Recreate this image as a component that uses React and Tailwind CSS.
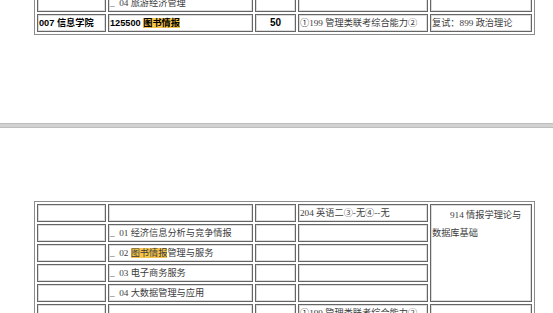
import React from "react";

const serif = "font-['Liberation_Serif','Noto_Sans_CJK_SC',serif]";
const sans = "font-['Liberation_Sans','Noto_Sans_CJK_SC',sans-serif]";

const Hl = ({ children }) => (
  <span className="bg-[#f6c54a]">{children}</span>
);

// one bordered cell of the old-style html table
const Cell = ({ w, className = "", children, ...rest }) => (
  <td
    {...rest}
    className={`${w} h-[18px] border border-[#666] shadow-[inset_0_0_0_1px_#dcdcdc] px-px align-middle leading-[16px] whitespace-nowrap overflow-hidden ${className}`}
  >
    {children}
  </td>
);

const widths = ["w-[69px]", "w-[145px]", "w-[41px]", "w-[130px]", "w-[102px]"];

const Sub = ({ no, children }) => (
  <span className="text-[#3c3c3c]">
    _{"\u00a0\u00a0"}
    {no} {children}
  </span>
);

export default function App() {
  return (
    <div className={`w-[553px] h-[313px] overflow-hidden bg-white text-[9.2px] ${serif}`}>
      {/* tail of previous page */}
      <table className="ml-[34px] -mt-[9px] w-[501px] table-fixed border-separate border-spacing-[2px] border border-[#8c8c8c]">
        <tbody>
          <tr>
            <Cell w={widths[0]} />
            <Cell w={widths[1]}>
              <Sub no="04">旅游经济管理</Sub>
            </Cell>
            <Cell w={widths[2]} />
            <Cell w={widths[3]} />
            <Cell w={widths[4]} />
          </tr>
          <tr>
            <Cell w={widths[0]} className={`${sans} font-bold text-black`}>
              007 信息学院
            </Cell>
            <Cell w={widths[1]} className={`${sans} font-bold text-black`}>
              125500 <Hl>图书情报</Hl>
            </Cell>
            <Cell w={widths[2]} className={`${sans} font-bold text-black text-center text-[10px]`}>
              50
            </Cell>
            <Cell w={widths[3]} className="text-[#3c3c3c]">
              ①199 管理类联考综合能力②
            </Cell>
            <Cell w={widths[4]} className="text-[#3c3c3c]">
              复试：899 政治理论
            </Cell>
          </tr>
        </tbody>
      </table>

      {/* page break */}
      <div className="mt-[88px] h-[5px] border-y border-[#bdbdbd] bg-[#d2d2d2]" />

      <table className="ml-[34px] mt-[73px] w-[501px] table-fixed border-separate border-spacing-[2px] border border-[#8c8c8c]">
        <tbody>
          <tr>
            <Cell w={widths[0]} />
            <Cell w={widths[1]} />
            <Cell w={widths[2]} />
            <Cell w={widths[3]} className="text-[#3c3c3c]">
              204 英语二③-无④--无
            </Cell>
            <Cell
              w={widths[4]}
              rowSpan={5}
              className="!align-top !whitespace-normal text-[#3c3c3c] leading-[18px] pt-px"
            >
              <span className="pl-[18px]">914 情报学理论与</span>
              <br />
              数据库基础
            </Cell>
          </tr>
          <tr>
            <Cell w={widths[0]} />
            <Cell w={widths[1]}>
              <Sub no="01">经济信息分析与竞争情报</Sub>
            </Cell>
            <Cell w={widths[2]} />
            <Cell w={widths[3]} />
          </tr>
          <tr>
            <Cell w={widths[0]} />
            <Cell w={widths[1]}>
              <Sub no="02">
                <Hl>图书情报</Hl>管理与服务
              </Sub>
            </Cell>
            <Cell w={widths[2]} />
            <Cell w={widths[3]} />
          </tr>
          <tr>
            <Cell w={widths[0]} />
            <Cell w={widths[1]}>
              <Sub no="03">电子商务服务</Sub>
            </Cell>
            <Cell w={widths[2]} />
            <Cell w={widths[3]} />
          </tr>
          <tr>
            <Cell w={widths[0]} />
            <Cell w={widths[1]}>
              <Sub no="04">大数据管理与应用</Sub>
            </Cell>
            <Cell w={widths[2]} />
            <Cell w={widths[3]} />
          </tr>
          <tr>
            <Cell w={widths[0]} />
            <Cell w={widths[1]} />
            <Cell w={widths[2]} />
            <Cell w={widths[3]} className="text-[#3c3c3c]">
              ①199 管理类联考综合能力②
            </Cell>
            <Cell w={widths[4]} />
          </tr>
        </tbody>
      </table>
    </div>
  );
}
